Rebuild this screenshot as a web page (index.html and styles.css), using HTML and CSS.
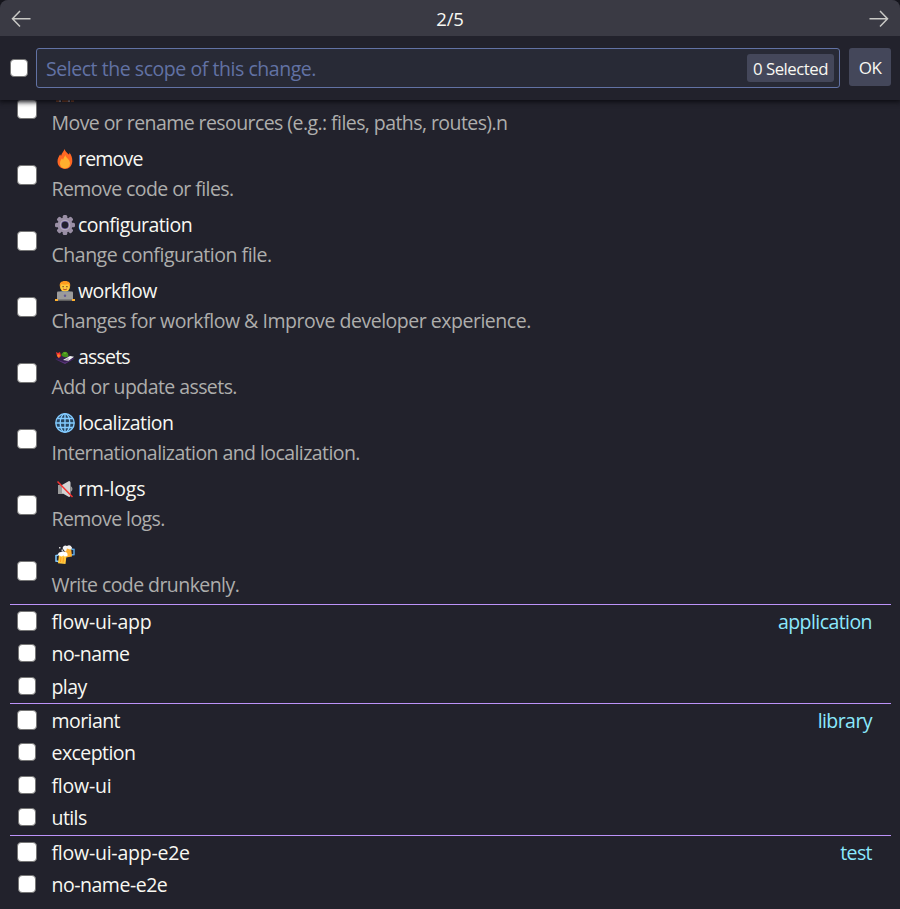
FILE: index.html
```html
<!DOCTYPE html>
<html lang="en">
<head>
<meta charset="utf-8">
<title>Select scope</title>
<link rel="stylesheet" href="styles.css">
</head>
<body>
<div class="window">
  <header class="titlebar">
    <svg class="arrow" viewBox="0 0 20 18"><path d="M9 1L1.500 8.800L9 16.500M1.500 8.800H19.500"/></svg>
    <span class="step">2/5</span>
    <svg class="arrow" viewBox="0 0 20 18"><path d="M11 1L18.500 8.800L11 16.500M18.500 8.800H.5"/></svg>
  </header>
  <div class="toolbar">
    <i class="check small"></i>
    <div class="field"><span class="placeholder">Select the scope of this change.</span><span class="count">0 Selected</span></div>
    <button class="ok">OK</button>
  </div>
  <main class="list">
    <div class="item">
      <i class="check"></i>
      <div><div class="name"><svg class="icon" viewBox="0 0 20 20"><path fill="#8a4522" d="M1 17h3v2H1zm6 0h6v2H7zm9 0h3v2h-3z"/><path fill="#a39cab" d="M4 17h2v2H4zm9 0h2v2h-2z"/></svg></div><div class="desc">Move or rename resources (e.g.: files, paths, routes).n</div></div>
    </div>
    <div class="item">
      <i class="check"></i>
      <div><div class="name"><svg class="icon" viewBox="0 0 20 20"><path fill="#ff6723" d="M9.500 0c1 3 3 4 4.300 5.600.6-.5.700-1.500.6-2.200C16.500 6 17.500 9 17.300 12.500 17 17 14 20 10 20S2.500 17 2.500 12.600C2.500 9 4 7.500 5.200 5.200c.2.800.4 1.200.9 1.600C6.600 4 8.500 3 9.500 0z"/><path fill="#ffb02e" d="M10.200 6c.8 3 4.800 4.500 4.800 8.300 0 3.200-2 5-5 5s-5-2-5-5c0-2.500 1.300-3.600 2-5 .3.800.7 1.300 1.200 1.500C8.300 8.600 9.800 8 10.200 6z"/></svg><span class="narrow">remove</span></div><div class="desc">Remove code or files.</div></div>
    </div>
    <div class="item">
      <i class="check"></i>
      <div><div class="name"><svg class="icon" viewBox="0 0 20 20"><g fill="#998ea4"><circle cx="10" cy="10" r="7.500"/><g id="teeth"><rect x="7.700" y="0" width="4.600" height="20" rx="1.500"/><rect x="0" y="7.700" width="20" height="4.600" rx="1.500"/></g><use href="#teeth" transform="rotate(45 10 10)"/></g><circle cx="10" cy="10" r="5.300" fill="#b4acbc"/><circle cx="10" cy="10" r="3.900" fill="#635994"/><circle cx="10" cy="10" r="3.200" fill="#22222c"/></svg><span>configuration</span></div><div class="desc loose">Change configuration file.</div></div>
    </div>
    <div class="item">
      <i class="check"></i>
      <div><div class="name"><svg class="icon" viewBox="0 0 20 20"><path fill="#4b7190" d="M3 13c1-3 3-3 7-3s6 0 7 3v4H3z"/><circle cx="10" cy="5.600" r="5" fill="#ffc83d"/><path fill="#ff9a1f" d="M5 6C4 2 6 0 10 0s6 2 5 6c-1-1-1-2-1.500-3C11 4 8 4 6.500 3 6 4 6 5 5 6z"/><path fill="#6b3b24" d="M7.500 5h1.200v1.300H7.500zm3.800 0h1.200v1.300h-1.200z"/><path d="M8 8q2 1.500 4 0" stroke="#bc4b28" fill="none"/><rect x="2" y="10.500" width="16" height="8.500" rx="1" fill="#9b9b9b"/><path fill="#606060" d="M2 18.500h16v1.500H2z"/><circle cx="10" cy="14.800" r="1.200" fill="#635994"/><path fill="#ffb02e" d="M0 18h3v2H0zm17 0h3v2h-3z"/></svg><span>workflow</span></div><div class="desc loose">Changes for workflow &amp; Improve developer experience.</div></div>
    </div>
    <div class="item">
      <i class="check"></i>
      <div><div class="name"><svg class="icon" viewBox="0 0 20 20"><path fill="#35204f" d="M0 12l10-6 10 5.500-10 5.500z"/><path fill="#593579" d="M0 12l10 3.500 10-4.500-10 6z"/><path fill="#f8312f" d="M1 5l2 1 2-1 1 4-2 2-2-2z"/><path fill="#ff822d" d="M3 7l2 1-1 3-2-2z"/><path fill="#44911b" d="M6.500 7q3.500-4 6.500-.5l.5 3q-4 2-7-1z"/><path fill="#68b52a" d="M8 5.500h4l-2 2z"/><path fill="#f4f4f4" d="M8 13l7-4 4 .7-5.500 4z"/><path fill="#b4acbc" d="M10 12.500l3-1.500 1.500 1-2.500 1.500z"/></svg><span class="narrow">assets</span></div><div class="desc">Add or update assets.</div></div>
    </div>
    <div class="item">
      <i class="check"></i>
      <div><div class="name"><svg class="icon" viewBox="0 0 20 20"><g stroke="#83cbff" stroke-width="1.400" fill="#28445f"><circle cx="10" cy="10" r="9.200"/><ellipse cx="10" cy="10" rx="4.800" ry="9.200"/><path d="M10 1v18M1 10h18M2.500 5.500h15M2.500 14.500h15"/></g></svg><span>localization</span></div><div class="desc">Internationalization and localization.</div></div>
    </div>
    <div class="item">
      <i class="check"></i>
      <div><div class="name"><svg class="icon" viewBox="0 0 20 20"><path fill="#9b9b9b" d="M3 6h5v9H3z"/><path fill="#d3d3d3" d="M7 6l7-4c1 0 1.500 1 1.500 2v12c0 1-.5 2-1.500 2l-7-4z"/><path fill="#9b9b9b" d="M15.500 7q2 1 2 3t-2 3z"/><path d="M2.500 2.500l15 15.500" stroke="#f8312f" stroke-width="1.500"/></svg><span class="wide">rm-logs</span></div><div class="desc">Remove logs.</div></div>
    </div>
    <div class="item">
      <i class="check"></i>
      <div><div class="name"><svg class="icon" viewBox="0 0 20 20"><path d="M16 4l3 .5v5l-3 .5" stroke="#5ca6e2" stroke-width="1.500" fill="none"/><path fill="#ffb02e" d="M9 3l7-.5 1 9-6 1z"/><path fill="#f4f4f4" d="M7.500 3Q9-.5 12 1q3-2 5 1.500 0 2-2 2l-3-1-1 3-2-1z"/><path d="M3.500 10L1 10.500v5.500l3 .5" stroke="#83cbff" stroke-width="1.500" fill="none"/><path fill="#ffc83d" d="M4 9.500l7.500 1L10.500 19l-7.500-.8z"/><path fill="#fff" d="M3 10q0-3 3-3 2-1.500 4 0 3 0 2.500 4l-3 .5-1-1-2 1z"/><path d="M6 12l-.5 5M8.500 12.500L8 17.500" stroke="#ff9a1f"/><path fill="#d3d3d3" d="M4 2h1.500v1.500H4zM6.500 4.500H8V6H6.500z"/></svg></div><div class="desc">Write code drunkenly.</div></div>
    </div>
    <section class="group g3">
      <div class="row first"><i class="check"></i><span class="wide">flow-ui-app</span><span class="kind">application</span></div>
      <div class="row"><i class="check small"></i><span>no-name</span></div>
      <div class="row"><i class="check small"></i><span>play</span></div>
    </section>
    <section class="group g4">
      <div class="row first"><i class="check"></i><span>moriant</span><span class="kind">library</span></div>
      <div class="row"><i class="check small"></i><span>exception</span></div>
      <div class="row"><i class="check small"></i><span class="wide">flow-ui</span></div>
      <div class="row"><i class="check small"></i><span>utils</span></div>
    </section>
    <section class="group g3">
      <div class="row first"><i class="check"></i><span class="wide">flow-ui-app-e2e</span><span class="kind">test</span></div>
      <div class="row"><i class="check small"></i><span class="loose">no-name-e2e</span></div>
    </section>
  </main>
</div>
</body>
</html>
```
FILE: styles.css
```css
* { box-sizing: border-box; }
body { margin: 0; background: #15151c; font: 19.500px/30px "Open Sans", "Noto Sans", sans-serif; letter-spacing: -.57px; color: #f8f8f2; }
.narrow { letter-spacing: -.8px; }
.loose { letter-spacing: -.48px; }
.wide { letter-spacing: -.23px; }
.window { height: 909px; display: flex; flex-direction: column; overflow: hidden; background: #22222c; border-radius: 8px 8px 0 0; }
.titlebar { position: relative; z-index: 2; flex: none; height: 36px; padding: 2px 11px 0; display: flex; align-items: center; justify-content: space-between; background: #3a3a44; }
.arrow { width: 20px; height: 18px; fill: none; stroke: #c8c8c5; stroke-width: 1.500; }
.step { font-size: 18.500px; letter-spacing: -.2px; }
.toolbar { flex: none; height: 64px; padding: 12px 9px 12px 10px; display: flex; align-items: flex-start; z-index: 1; box-shadow: 0 1px 5px 1px #0c0c12; background: #22222c; }
.check { flex: none; display: block; width: 20px; height: 20px; border: 1.500px solid #767676; border-radius: 4px; background: #fff; }
.check.small { width: 18px; height: 18px; }
.toolbar .check { margin: 11px 8px 0 0; }
.field { flex: 1; height: 40px; padding: 0 5px 0 9px; display: flex; align-items: center; justify-content: space-between; border: 1px solid #6272a4; border-radius: 3px; background: #282a36; }
.placeholder { padding-top: 2px; color: #6272a4; letter-spacing: -.45px; }
.count { width: 87px; height: 28px; line-height: 30px; text-align: center; white-space: nowrap; border-radius: 3px; background: #44475a; font-size: 16.800px; letter-spacing: -.5px; }
.ok { width: 42px; height: 38px; margin-left: 9px; padding: 2px 0 0; border: 0; border-radius: 3px; background: #44475a; color: #f8f8f2; font: 17px/36px "Open Sans", sans-serif; letter-spacing: -.5px; }
.list { flex: 1; min-height: 0; overflow: hidden; padding: 0 9px 0 10px; margin-top: -24px; }
.item { height: 66px; padding: 2px 0 4px 7px; display: flex; align-items: center; gap: 14.500px; white-space: nowrap; }
.item .check { margin-top: 1px; }
.name { height: 30px; display: flex; align-items: center; padding-left: 3px; }
.icon { width: 20px; height: 20px; margin-right: 3.500px; }
.desc { height: 30px; color: #aeaeac; }
.group { border-top: 1px solid #bd93f9; display: flex; flex-direction: column; }
.g3 { height: 99px; }
.g4 { height: 132px; }
.row { flex: 0 0 32.700px; display: flex; align-items: center; padding: 0 19px 0 7px; }
.row.first span { padding-top: 1px; }
.row .check { margin: 0 14.500px 1px 0; }
.row .check.small { margin: 0 15.500px 2px 1px; }
.kind { margin-left: auto; color: #8be9fd; }
```
